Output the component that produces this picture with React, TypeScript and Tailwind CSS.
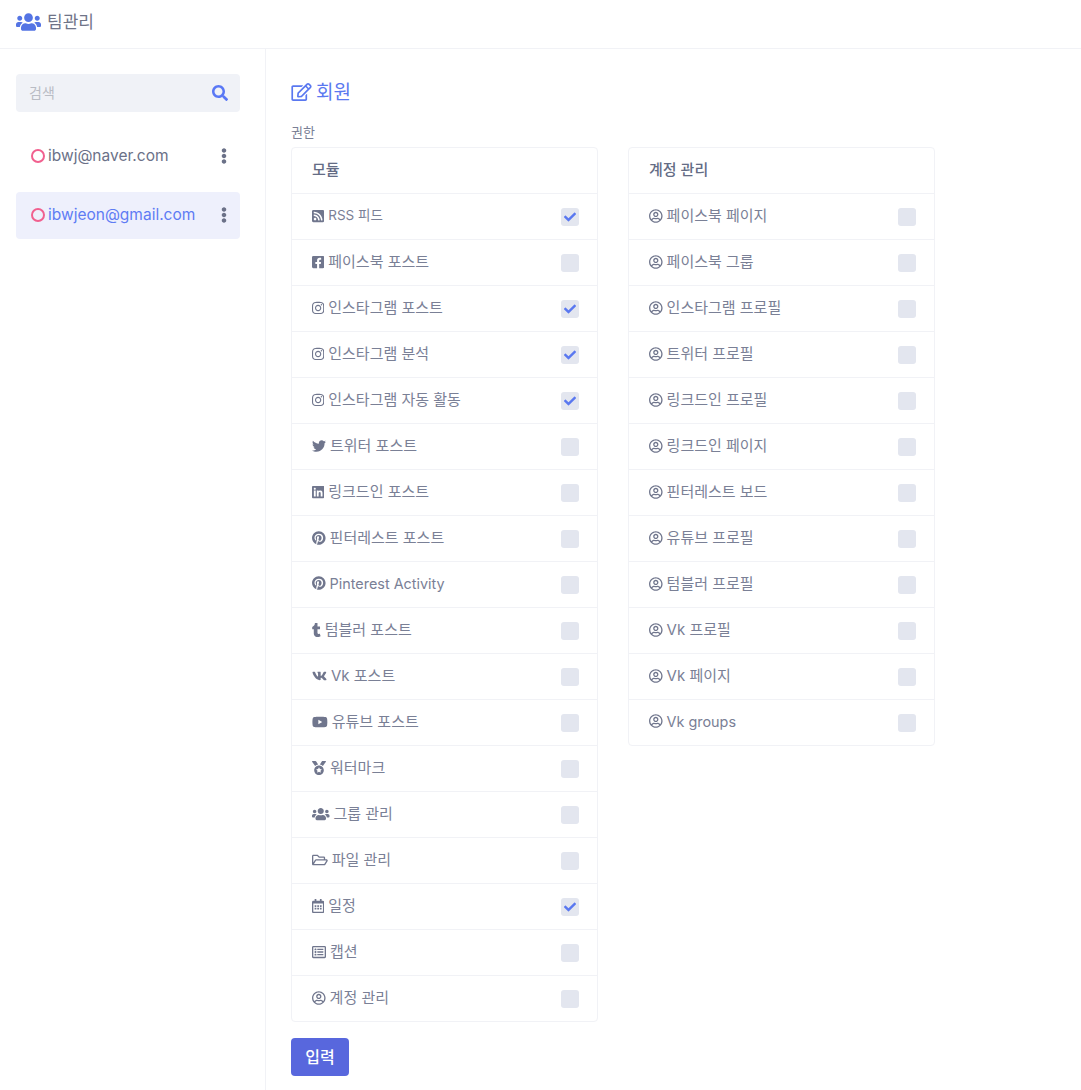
import React from "react";
import {
  FaUsers, FaSearch, FaRssSquare, FaFacebookSquare, FaInstagram, FaTwitter, FaLinkedin, FaPinterest,
  FaTumblr, FaVk, FaYoutube, FaMedal, FaRegFolderOpen, FaRegCalendarAlt, FaRegListAlt, FaRegUserCircle,
  FaRegEdit, FaEllipsisV, FaCheck,
} from "react-icons/fa";

const font = "font-['Inter','Noto_Sans_CJK_KR',sans-serif]";

type Row = { icon: React.ComponentType<{ className?: string }>; w: string; label: string; checked?: boolean; text?: string };

const koText = "text-[15px]";
const enText = "relative top-[-1px] text-[14.4px]";

const modules: Row[] = [
  { icon: FaRssSquare, w: "w-[12.25px]", label: "RSS 피드", checked: true, text: "relative top-[-1px] text-[13.5px]" },
  { icon: FaFacebookSquare, w: "w-[12.25px]", label: "페이스북 포스트" },
  { icon: FaInstagram, w: "w-[12.25px]", label: "인스타그램 포스트", checked: true },
  { icon: FaInstagram, w: "w-[12.25px]", label: "인스타그램 분석", checked: true },
  { icon: FaInstagram, w: "w-[12.25px]", label: "인스타그램 자동 활동", checked: true },
  { icon: FaTwitter, w: "w-[14px]", label: "트위터 포스트" },
  { icon: FaLinkedin, w: "w-[12.25px]", label: "링크드인 포스트" },
  { icon: FaPinterest, w: "w-[13.6px]", label: "핀터레스트 포스트" },
  { icon: FaPinterest, w: "w-[13.6px]", label: "Pinterest Activity", text: enText },
  { icon: FaTumblr, w: "w-[8.75px]", label: "텀블러 포스트" },
  { icon: FaVk, w: "w-[15px]", label: "Vk 포스트" },
  { icon: FaYoutube, w: "w-[15.75px]", label: "유튜브 포스트" },
  { icon: FaMedal, w: "w-[14px]", label: "워터마크" },
  { icon: FaUsers, w: "w-[17.5px]", label: "그룹 관리" },
  { icon: FaRegFolderOpen, w: "w-[15.75px]", label: "파일 관리" },
  { icon: FaRegCalendarAlt, w: "w-[12.25px]", label: "일정", checked: true },
  { icon: FaRegListAlt, w: "w-[14px]", label: "캡션" },
  { icon: FaRegUserCircle, w: "w-[13.6px]", label: "계정 관리" },
];

const accounts: Row[] = [
  "페이스북 페이지", "페이스북 그룹", "인스타그램 프로필", "트위터 프로필", "링크드인 프로필", "링크드인 페이지",
  "핀터레스트 보드", "유튜브 프로필", "텀블러 프로필", "Vk 프로필", "Vk 페이지", "Vk groups",
].map((label) => ({ icon: FaRegUserCircle, w: "w-[13.6px]", label, text: label === "Vk groups" ? enText : undefined }));

function Card({ title, rows }: { title: string; rows: Row[] }) {
  return (
    <div className="w-[307px] rounded border border-[#f1f2f6] bg-white">
      <div className="flex h-[45px] items-center pl-[20px] text-[15px] font-medium text-[#646c85]">{title}</div>
      {rows.map((r) => {
        const Icon = r.icon;
        return (
          <div key={r.label} className="flex h-[46px] items-center justify-between border-t border-[#f1f2f6] pl-[20px] pr-[18px]">
            <div className="flex items-center gap-[4px] text-[#7a8096]">
              <Icon className={`relative top-[-1px] h-[14px] ${r.w} shrink-0 text-[#70768d]`} />
              <span className={r.text ?? koText}>{r.label}</span>
            </div>
            <div className="flex h-[18px] w-[18px] items-center justify-center rounded-[3px] bg-[#e3e6ef]">
              {r.checked && <FaCheck className="text-[12px] text-[#5a78f0]" />}
            </div>
          </div>
        );
      })}
    </div>
  );
}

function Person({ email, active }: { email: string; active?: boolean }) {
  return (
    <div className={`mb-3 flex h-[47px] items-center justify-between rounded pb-[2px] pl-[15px] pr-[13px] ${active ? "bg-[#eef0fc]" : ""}`}>
      <div className="flex items-center gap-[3px]">
        <span className="h-[14px] w-[14px] rounded-full border-[2.5px] border-[#f1608f]" />
        <span className={`text-[15.5px] ${active ? "text-[#5f7cf4]" : "text-[#6b7188]"}`}>{email}</span>
      </div>
      <FaEllipsisV className="h-[16px] w-[6px] text-[#6b7188]" />
    </div>
  );
}

export default function App() {
  return (
    <div className={`h-[1090px] overflow-hidden bg-white ${font}`}>
      <header className="flex h-[49px] items-center gap-[6px] border-b border-[#f1f2f6] pb-[5px] pl-[16px]">
        <FaUsers className="h-[20px] w-[25px] text-[#5474e4]" />
        <span className="relative top-[1px] text-[17px] text-[#6f7488]">팀관리</span>
      </header>
      <div className="flex h-[1041px]">
        <aside className="w-[266px] shrink-0 border-r border-[#f1f2f6] pl-4 pr-[25px] pt-[25px]">
          <div className="mb-[21px] flex h-[38px] items-center justify-between rounded bg-[#f0f2f7] pl-[13px] pr-[12px]">
            <span className="relative top-[-1px] text-[14px] text-[#b9bcc4]">검색</span>
            <FaSearch className="text-[16px] text-[#5a78f5]" />
          </div>
          <Person email="ibwj@naver.com" />
          <Person email="ibwjeon@gmail.com" active />
        </aside>
        <main className="flex-1 pl-[25px] pt-[29px]">
          <div className="flex h-[28px] items-center gap-[4px] text-[#5a78f0]">
            <FaRegEdit className="h-[18px] w-[21px]" />
            <span className="relative top-[1px] text-[19px]">회원</span>
          </div>
          <div className="mt-[19px] flex h-[16px] items-center text-[13px] text-[#7a8096]">권한</div>
          <div className="mt-[6px] flex items-start gap-[30px]">
            <Card title="모듈" rows={modules} />
            <Card title="계정 관리" rows={accounts} />
          </div>
          <button className="mt-4 flex h-[38px] w-[58px] items-center justify-center rounded bg-[#5867dd] text-[16px] font-medium text-white">입력</button>
        </main>
      </div>
    </div>
  );
}
